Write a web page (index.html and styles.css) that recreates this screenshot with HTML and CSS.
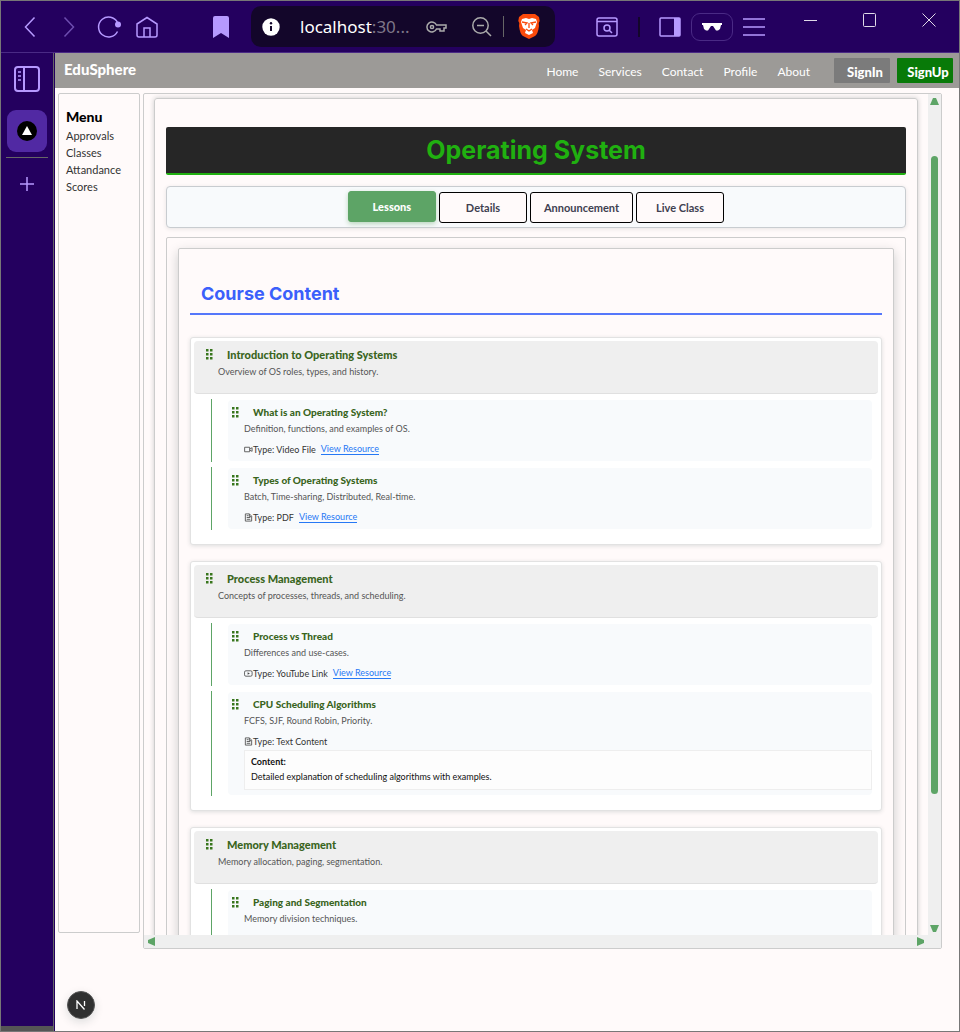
FILE: index.html
```html
<!DOCTYPE html>
<html lang="en">
<head>
<meta charset="utf-8">
<title>EduSphere</title>
<link rel="stylesheet" href="styles.css">
</head>
<body>
<svg class="sprite" aria-hidden="true">
  <symbol id="grip" viewBox="0 0 7 11"><path d="M0 0h2.500v2.500H0zM4 0h2.500v2.500H4zM0 4h2.500v2.500H0zM4 4h2.500v2.500H4zM0 8h2.500v2.500H0zM4 8h2.500v2.500H4z" fill="#38761d"/></symbol>
  <symbol id="video" viewBox="0 0 10 10"><path d="M.7 2.500h5.600v5H.7zM6.500 4.500 9 3v4L6.500 5.800" fill="none" stroke="#555"/></symbol>
  <symbol id="file" viewBox="0 0 10 10"><path d="M1.500 1h4.500l2.500 2.500V9h-7zM3 5h4M3 7h4M3 3h2M6 1v3h2" fill="none" stroke="#555"/></symbol>
  <symbol id="tube" viewBox="0 0 10 10"><rect x=".6" y="2" width="8.400" height="6" rx="1.500" fill="none" stroke="#555"/><path d="M4 3.500 6.500 5 4 6.500z" fill="#444"/></symbol>
</svg>
<div class="window">
  <header class="toolbar">
    <div class="tools history">
      <button aria-label="Back"><svg width="12" height="22" viewBox="0 0 12 22"><path d="M10.500 1.500 1.500 11l9 9.500"/></svg></button>
      <button class="off" aria-label="Forward"><svg width="12" height="22" viewBox="0 0 12 22"><path d="m1.500 1.500 9 9.500-9 9.500"/></svg></button>
      <button aria-label="Reload"><svg width="24" height="22" viewBox="0 0 24 22"><path d="M20.500 6.500A10 10 0 1 0 20.500 15.500"/><circle cx="21" cy="8.500" r="3" class="solid"/></svg></button>
      <button aria-label="Home"><svg width="22" height="22" viewBox="0 0 22 22"><path d="M1 8 11 1.500 21 8v11q0 2-2 2H3q-2 0-2-2zM8 21v-9h6v9"/></svg></button>
    </div>
    <button class="mark" aria-label="Bookmark"><svg width="16" height="22" viewBox="0 0 16 22"><path class="solid" d="M2 0h12q2 0 2 2v20l-8-5-8 5V2q0-2 2-2z"/></svg></button>
    <div class="address">
      <svg width="18" height="18" viewBox="0 0 18 18"><circle cx="9" cy="9" r="8.700" fill="#fff"/><path d="M9 8v5" stroke="#13062a" stroke-width="2"/><circle cx="9" cy="5.300" r="1.200" fill="#13062a"/></svg>
      <span class="url">localhost<span>:30...</span></span>
      <svg class="key" width="22" height="14" viewBox="0 0 22 14"><path d="M10.500 5H20v3h-2v3h-4V9h-3.500A5 5 0 1 1 10.500 5z"/><circle cx="6" cy="7" r="1.600"/></svg>
      <svg width="20" height="20" viewBox="0 0 20 20"><circle cx="8.500" cy="8.500" r="7.700"/><path d="m14 14 5 5M5 8.500h7"/></svg>
      <i class="bar"></i>
      <svg width="22" height="25" viewBox="0 0 22 25"><path d="m5 0-4 3-.7 4 1 2-.3 3q1 8 4 10l6 3 6-3q3-2 4-10l-.3-3 1-2L21 3l-4-3z" fill="#fb4a0b" stroke="none"/><path d="m4 5 4-1 3 1 3-1 4 1 1 3-2 6-3 2 1 3-4 2-4-2 1-3-3-2-2-6z" fill="#fff" stroke="none"/><path d="m4 8 5 1-2 2M18 8l-5 1 2 2M11 9v5m-3 1 3 2 3-2" stroke="#fb4a0b" stroke-width="1.300"/></svg>
    </div>
    <div class="tools extras">
      <button aria-label="Search tabs"><svg width="22" height="20" viewBox="0 0 22 20"><rect x="1" y="1" width="20" height="18" rx="2"/><path d="M1 4.500h20M13 13l3 3"/><circle cx="11" cy="11" r="3"/></svg></button>
      <i class="divider"></i>
      <button aria-label="Sidebar"><svg width="22" height="20" viewBox="0 0 22 20"><rect x="1" y="1" width="20" height="18" rx="1"/><path class="solid" d="M15 1h6v18h-6z"/></svg></button>
      <button class="private" aria-label="Private"><svg width="20" height="8" viewBox="0 0 20 8"><path d="M0 0h20v2h-1l-1 4-2 1.500h-2L11 3H9L6 7.500H4L2 6 1 2H0z" fill="#fff" stroke="none"/></svg></button>
      <button aria-label="Menu"><svg width="22" height="20" viewBox="0 0 22 20"><path d="M0 2h22M0 10h22M0 18h22"/></svg></button>
    </div>
    <div class="controls">
      <button aria-label="Minimize"><svg width="14" height="14" viewBox="0 0 14 14"><path d="M0 7.500h13"/></svg></button>
      <button aria-label="Maximize"><svg width="14" height="14" viewBox="0 0 14 14"><rect x=".5" y=".5" width="12" height="13" rx="1"/></svg></button>
      <button aria-label="Close"><svg width="14" height="14" viewBox="0 0 14 14"><path d="m.5.5 13 13m0-13-13 13"/></svg></button>
    </div>
  </header>
  <div class="workspace">
    <aside class="rail">
      <button aria-label="Tabs panel"><svg width="26" height="26" viewBox="0 0 26 26"><rect x="1" y="1" width="24" height="24" rx="3" stroke-width="2"/><path d="M10 1v24" stroke-width="2"/><path d="M4 6h3M4 10h3M4 14h3"/></svg></button>
      <button class="tab" aria-label="Current tab"><svg width="20" height="20" viewBox="0 0 20 20"><circle cx="10" cy="10" r="10" fill="#000" stroke="none"/><path d="m10 5 5 9H5z" fill="#fff" stroke="none"/></svg></button>
      <i class="rule"></i>
      <button aria-label="New tab"><svg width="14" height="14" viewBox="0 0 14 14"><path d="M7 0v14M0 7h14"/></svg></button>
      <i class="foot"></i>
    </aside>
    <div class="site">
      <nav class="nav">
        <a class="brand" href="#">EduSphere</a>
        <div class="links"><a href="#">Home</a><a href="#">Services</a><a href="#">Contact</a><a href="#">Profile</a><a href="#">About</a></div>
        <div class="auth"><button>SignIn</button><button class="up">SignUp</button></div>
      </nav>
      <div class="layout">
        <aside class="menu"><h2>Menu</h2><a href="#">Approvals</a><a href="#">Classes</a><a href="#">Attandance</a><a href="#">Scores</a></aside>
        <main class="pane">
          <div class="view">
            <div class="course">
              <h1>Operating System</h1>
              <div class="tabs"><button class="active">Lessons</button><button>Details</button><button>Announcement</button><button>Live Class</button></div>
              <div class="frame"><section class="panel">
                <h2>Course Content</h2>
                <article class="module">
                  <header><h3><svg><use href="#grip"/></svg>Introduction to Operating Systems</h3><p>Overview of OS roles, types, and history.</p></header>
                  <ul>
                    <li><div class="lesson"><h4><svg><use href="#grip"/></svg>What is an Operating System?</h4><p>Definition, functions, and examples of OS.</p><div class="type"><svg><use href="#video"/></svg>Type: Video File<a href="#">View Resource</a></div></div></li>
                    <li><div class="lesson"><h4><svg><use href="#grip"/></svg>Types of Operating Systems</h4><p>Batch, Time-sharing, Distributed, Real-time.</p><div class="type"><svg><use href="#file"/></svg>Type: PDF<a href="#">View Resource</a></div></div></li>
                  </ul>
                </article>
                <article class="module">
                  <header><h3><svg><use href="#grip"/></svg>Process Management</h3><p>Concepts of processes, threads, and scheduling.</p></header>
                  <ul>
                    <li><div class="lesson"><h4><svg><use href="#grip"/></svg>Process vs Thread</h4><p>Differences and use-cases.</p><div class="type"><svg><use href="#tube"/></svg>Type: YouTube Link<a href="#">View Resource</a></div></div></li>
                    <li><div class="lesson"><h4><svg><use href="#grip"/></svg>CPU Scheduling Algorithms</h4><p>FCFS, SJF, Round Robin, Priority.</p><div class="type"><svg><use href="#file"/></svg>Type: Text Content</div><div class="text"><strong>Content:</strong><span>Detailed explanation of scheduling algorithms with examples.</span></div></div></li>
                  </ul>
                </article>
                <article class="module">
                  <header><h3><svg><use href="#grip"/></svg>Memory Management</h3><p>Memory allocation, paging, segmentation.</p></header>
                  <ul>
                    <li><div class="lesson"><h4><svg><use href="#grip"/></svg>Paging and Segmentation</h4><p>Memory division techniques.</p></div></li>
                  </ul>
                </article>
              </section></div>
            </div>
          </div>
          <div class="vbar"><svg width="9" height="7" viewBox="0 0 9 7"><path d="M3 0h3l3 7H0z"/></svg><div class="track"><i></i></div><svg width="9" height="7" viewBox="0 0 9 7"><path d="M0 0h9L6 7H3z"/></svg></div>
          <div class="hbar"><svg width="7" height="9" viewBox="0 0 7 9"><path d="M7 0v9L0 6V3z"/></svg><svg width="7" height="9" viewBox="0 0 7 9"><path d="M0 0v9l7-3V3z"/></svg></div>
        </main>
      </div>
      <button class="badge" aria-label="Developer tools"><svg width="10" height="10" viewBox="0 0 10 10"><path d="M1 9V1l7.500 8.500M8.500 1v5" stroke="#fff" stroke-width="1.300" fill="none"/></svg></button>
    </div>
  </div>
</div>
</body>
</html>
```
FILE: styles.css
```css
* { box-sizing: border-box; }
body { margin: 0; font-family: Lato, "Open Sans", sans-serif; background: #fffafa; color: #111; }
h1, h2, h3, h4, p, ul { margin: 0; padding: 0; }
ul { list-style: none; }
button { font: inherit; color: inherit; border: 0; padding: 0; background: none; display: flex; align-items: center; justify-content: center; }
a { color: inherit; text-decoration: none; }
svg { display: block; flex: none; }
.sprite { position: absolute; width: 0; height: 0; }

.window { height: 100vh; border: 1px solid #777; display: flex; flex-direction: column; overflow: hidden; }

.toolbar { flex: none; height: 52px; background: #24005f; border-bottom: 1px solid #4a2a85; display: flex; align-items: center; }
.toolbar svg, .rail svg { fill: none; stroke: #b699ff; stroke-width: 1.5; }
.toolbar .solid { fill: #b699ff; stroke: none; }
.tools { display: flex; align-items: center; }
.history { margin-left: 23px; }
.history button { margin-right: 15px; }
.history button:first-child { margin-right: 27px; }
.history button.off { margin-right: 22px; opacity: .5; }
.mark { margin-left: 40px; }
.address { flex: 1; margin-left: 22px; height: 41px; border-radius: 10px; background: #13062a; display: flex; align-items: center; padding: 0 15px 0 11px; }
.address svg { stroke: #aaa; }
.address > svg:first-child { stroke: none; }
.url { flex: 1; margin-left: 20px; font: 17px "Noto Sans", sans-serif; color: #fff; white-space: nowrap; }
.url span { color: #7e7688; }
.key { margin-right: 24px; }
.bar { width: 1px; height: 21px; background: #666; margin: 0 14px 0 11px; }
.extras { margin-left: 41px; }
.divider { width: 2px; height: 20px; background: #13062a; margin: 0 19px 0 20px; }
.private { width: 42px; height: 28px; border: 1px solid #4a2a85; border-radius: 9px; margin: 0 10px; }
.controls { align-self: flex-start; display: flex; gap: 45px; margin: 12px 23px 0 39px; }
.toolbar .controls svg { stroke: #e0dae8; stroke-width: 1; }

.workspace { flex: 1; min-height: 0; display: flex; }
.rail { flex: none; width: 54px; background: #24005f; border-right: 1px solid #24005f; box-shadow: inset -1px 0 #666; display: flex; flex-direction: column; align-items: center; padding: 13px 1px 0 0; }
.tab { width: 40px; height: 42px; border-radius: 9px; background: #5129a3; margin: 18px 0 5px; }
.rule { width: 42px; height: 1px; background: #666; margin-bottom: 19px; }
.foot { margin-top: auto; width: 100%; height: 5px; background: #555; }

.site { flex: 1; min-width: 0; display: flex; flex-direction: column; background: #fffafa; }
.nav { flex: none; height: 35px; background: #9c9a97; color: #fff; display: flex; align-items: center; padding: 0 6px 0 9px; font-size: 12px; }
.brand { font-size: 15px; font-weight: 900; margin-bottom: 4px; }
.links { display: flex; gap: 20px; margin: 2px 24px 0 auto; }
.auth { display: flex; gap: 7px; font-size: 13px; font-weight: 900; }
.auth button { height: 25px; width: 56px; padding: 2px 0 0 6px; background: #7b7b7b; border-radius: 1px; }
.auth .up { background: #087a08; }
.layout { flex: 1; min-height: 0; display: flex; align-items: stretch; gap: 3px; padding: 5px 17px 0 3px; }
.menu { flex: none; width: 82px; border: 1px solid #ccc; border-radius: 2px; margin-bottom: 16px; padding: 13px 7px; font-size: 11px; line-height: 17px; color: #333; }
.menu a { display: block; }
.menu h2 { font-size: 14px; line-height: 20px; font-weight: 900; color: #000; }

.pane { flex: 1; min-width: 0; display: grid; grid-template: minmax(0, 1fr) 13px / minmax(0, 1fr) 13px; border: 1px solid #ccc; border-radius: 2px; }
.view { overflow: hidden; padding: 4px 10px 0; }
.course { border: 1px solid #ccc; border-radius: 3px; box-shadow: 0 0 5px #ccc; padding: 28px 11px; }
.course h1 { height: 48px; background: #262626; border-bottom: 2px solid #20b010; border-radius: 2px; color: #20b010; font: 700 25px/46px Inter, sans-serif; text-align: center; }
.tabs { margin: 11px 0 9px; height: 42px; border: 1px solid #c8ccd0; border-radius: 4px; background: #f8fafc; box-shadow: 0 1px 4px #e8e4e4; display: flex; align-items: center; justify-content: center; gap: 3px; font-size: 11px; font-weight: 700; color: #404050; }
.tabs button { min-width: 88px; height: 31px; padding: 0 13px; border: 1px solid #000; border-radius: 3px; background: #fffafa; }
.tabs .active { background: #5da466; border-color: #5da466; color: #fff; box-shadow: 0 2px 5px #b9d6bd; font-weight: 900; margin-bottom: 2px; }
.frame { border: 1px solid #ccc; border-radius: 2px; padding: 10px 11px; }
.panel { border: 1px solid #ccc; border-radius: 2px; box-shadow: 0 4px 12px #ccc; background: #fffafa; padding: 29px 11px; }
.panel > h2 { height: 37px; padding-left: 11px; border-bottom: 2px solid #5577fa; margin-bottom: 22px; font: 700 18px/32px Inter, sans-serif; color: #3b5ffb; }

.module { background: #fff; border: 1px solid #e2e2e2; border-radius: 3px; box-shadow: 0 1px 4px #ddd; padding: 3px 3px 14px; margin-bottom: 16px; }
.module header { height: 53px; background: #efefef; border-bottom: 1px solid #e0e0e0; border-radius: 4px; padding: 5px 12px; }
.module h3, .module h4 { display: flex; align-items: center; font-size: 11px; line-height: 17px; font-weight: 900; color: #3a651d; }
.module h4 { font-size: 10px; }
.module h3 svg, .module h4 svg { width: 7px; height: 11px; margin-right: 14px; }
.module p { font-size: 9px; line-height: 17px; color: #555; }
.module header p { padding-left: 12px; }
.module ul { display: flex; flex-direction: column; gap: 5px; margin: 5px 6px 0 17px; }
.module li { border-left: 1px solid #5da466; padding: 1px 0 1px 16px; }
.lesson { min-height: 61px; background: #f8fafc; border-radius: 4px; padding: 4px 0 2px 4px; }
.lesson h4 svg { margin-right: 14px; }
.lesson p, .type, .text { margin-left: 12px; }
.lesson p { line-height: 16px; }
.type { display: flex; align-items: center; margin-top: 4px; height: 17px; font-size: 9px; color: #333; }
.type svg { width: 9px; height: 9px; }
.type a { color: #2678f5; border-bottom: 1px solid #2678f5; line-height: 10px; margin-left: 5px; }
.text { display: flex; flex-direction: column; border: 1px solid #eee; background: #fdfdfd; padding: 3px 6px 5px; margin-bottom: 3px; font-size: 9px; line-height: 15px; }
.vbar, .hbar { background: #efefef; display: flex; align-items: center; justify-content: space-between; }
.vbar { flex-direction: column; padding: 4px 0 3px; }
.vbar svg, .hbar svg { fill: #5da466; }
.track { flex: 1; width: 7px; display: flex; padding: 51px 0 131px; }
.track i { flex: 1; border-radius: 4px; background: #5da466; }
.hbar { grid-column: 1 / 3; padding: 0 17px 0 4px; }
.badge { flex: none; align-self: flex-start; width: 28px; height: 28px; margin: 42px 0 12px 12px; border-radius: 50%; background: #303030; border: 1px solid #555; box-shadow: 0 3px 10px #ddd; }
```
